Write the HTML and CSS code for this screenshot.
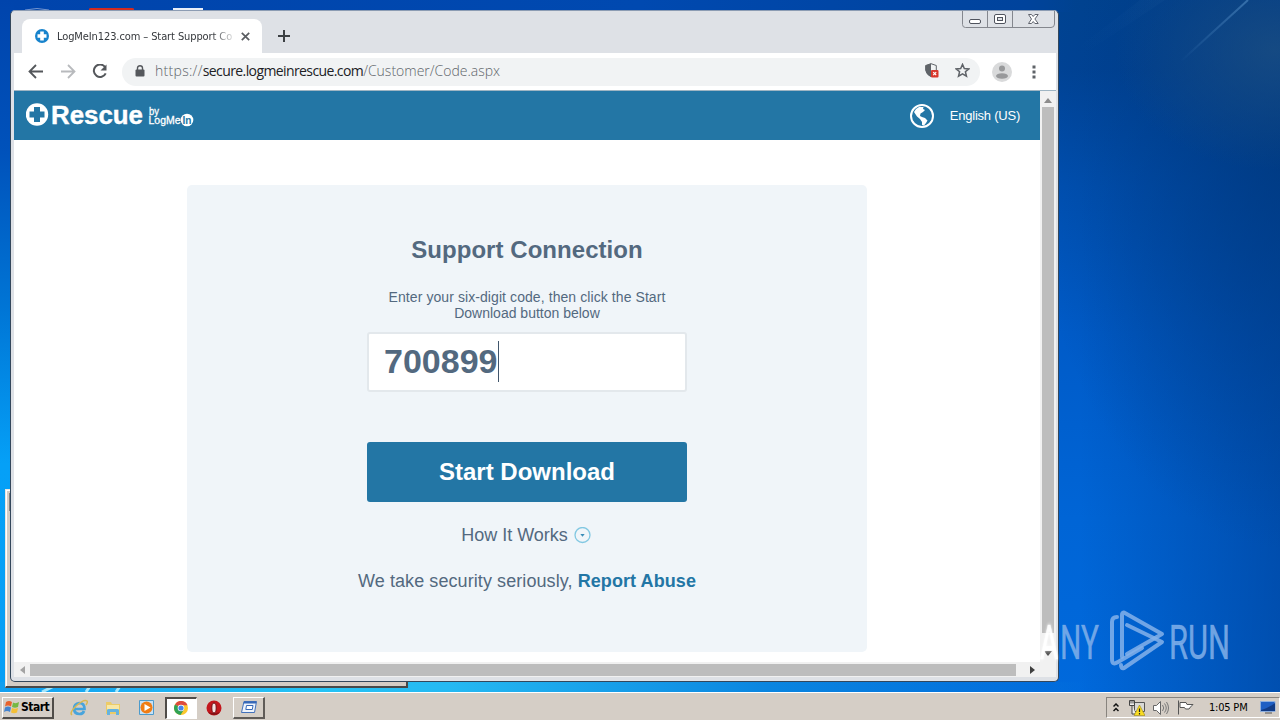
FILE: index.html
```
<!DOCTYPE html>
<html lang="en">

<head>
    <meta charset="utf-8">
    <title>LogMeIn123.com – Start Support Connection</title>
    <link rel="stylesheet" href="styles.css">
</head>

<body>
    <div class="desktop">
        <svg class="wallpaper" width="1280" height="693" viewBox="0 0 1280 693">
            <defs>
                <linearGradient id="ray" x1="0" y1="1" x2="1" y2="0">
                    <stop offset="0" stop-color="#5f9ad0" stop-opacity="0" />
                    <stop offset="1" stop-color="#5f9ad0" stop-opacity=".5" />
                </linearGradient>
            </defs>
            <path d="M1180 62L1248 0" stroke="url(#ray)" stroke-width="2" />
            <path d="M1075 50L1140 0H1165L1090 50z" fill="url(#ray)" opacity=".08" />
            <path d="M42 692L66 680M86 692L94 680M116 692L124 680" stroke="#a5e6fa" stroke-width="3" />
            <path d="M25 10q12-3 24 0" stroke="#7595cf" fill="none" />
            <path d="M89 11V9q0-1 2-1h41q2 0 2 1v2z" fill="#d42b20" />
            <path d="M173 8h30v3h-30z" fill="#e8eef8" />
        </svg>

        <div class="backwindow"></div>

        <div class="window">
            <div class="tabstrip">
                <div class="tab">
                    <svg width="14" height="14" viewBox="0 0 14 14">
                        <circle cx="7" cy="7" r="7" fill="#1783cc" />
                        <path d="M5.2 2.5h3.6v2.7h2.7v3.6H8.800v2.700H5.200V8.800H2.500V5.200h2.700z" fill="#fff" />
                    </svg>
                    <span class="tabtitle">LogMeIn123.com – Start Support Co</span>
                    <svg class="tabclose" width="9" height="9" viewBox="0 0 9 9">
                        <path d="M.8.8l7.400 7.400M8.200.8L.8 8.200" stroke="#5a5d61" stroke-width="1.700" />
                    </svg>
                </div>
                <svg class="newtab" width="12" height="12" viewBox="0 0 12 12">
                    <path d="M6 0v12M0 6h12" stroke="#3c4043" stroke-width="2" />
                </svg>
                <svg class="winbuttons" width="94" height="18" viewBox="0 0 94 18">
                    <path d="M.5 0V13.500Q.5 16.500 3.500 16.500H89Q92.500 16.500 92.500 13V0M25.500 0V16M50.500 0V16" fill="none" stroke="#84878e" />
                    <rect x="7.500" y="8.500" width="11" height="4" rx="1.500" fill="#fff" stroke="#50545e" />
                    <rect x="32.500" y="3.500" width="11" height="9" rx="1.500" fill="#fff" stroke="#50545e" />
                    <rect x="35.500" y="6.500" width="5" height="3" fill="#dee1e6" stroke="#50545e" />
                    <path d="M66.500 3.500h3l1.700 2 1.700-2h3.300l-3.300 4.500 3.300 4.500h-3.300l-1.700-2-1.700 2h-3l3-4.500z" fill="#fff" stroke="#60646e" />
                </svg>
            </div>

            <div class="toolbar">
                <svg class="nav" width="79" height="16" viewBox="0 0 79 16">
                    <path d="M15 7.500H2M8 1L1.500 7.500L8 14" fill="none" stroke="#54575b" stroke-width="1.800" />
                    <path d="M33 7.500H46M40 1L46.500 7.500L40 14" fill="none" stroke="#b8babd" stroke-width="1.800" />
                    <path d="M77 3A6.200 6.200 0 1 0 77.700 9.300" fill="none" stroke="#54575b" stroke-width="2" />
                    <path d="M78.500.5v6h-6z" fill="#54575b" />
                </svg>
                <div class="omnibox">
                    <svg width="10" height="12" viewBox="0 0 10 12">
                        <rect x=".5" y="4.500" width="9" height="7" rx="1" fill="#55585c" />
                        <path d="M2.500 5V3a2.500 2.300 0 0 1 5 0v2" fill="none" stroke="#55585c" stroke-width="1.400" />
                    </svg>
                    <span class="url"><span class="scheme">https://</span><b>secure.logmeinrescue.com</b>/Customer/Code.aspx</span>
                    <svg class="shield" width="14" height="15" viewBox="0 0 14 15">
                        <path d="M6 .7L11.300 2.500V7Q11 11 6 13.500Q1 11 .7 7V2.500z" fill="#f1f3f4" stroke="#5f6368" />
                        <path d="M6 .5L.5 2.500V7Q1 11.500 6 14z" fill="#5f6368" />
                        <rect x="6" y="7" width="7.500" height="7.500" rx="1" fill="#d9372c" />
                        <path d="M8.200 9.200l3 3m0-3l-3 3" stroke="#fff" stroke-width="1.200" />
                    </svg>
                    <svg width="15" height="15" viewBox="0 0 14 14">
                        <path d="M7 1.300L8.700 5.100L12.900 5.500L9.700 8.200L10.700 12.300L7 10.100L3.300 12.300L4.300 8.200L1.100 5.500L5.300 5.100z" fill="none" stroke="#5f6368" stroke-width="1.400" />
                    </svg>
                </div>
                <svg class="avatar" width="20" height="20" viewBox="0 0 20 20">
                    <circle cx="10" cy="10" r="10" fill="#d9dadb" />
                    <circle cx="10" cy="6.500" r="3" fill="#98999b" />
                    <ellipse cx="10" cy="14" rx="6" ry="2.800" fill="#98999b" />
                </svg>
                <svg class="menu" width="4" height="14" viewBox="0 0 4 14">
                    <path d="M.5.5h3v3h-3zM.5 5.500h3v3h-3zM.5 10.500h3v3h-3z" fill="#5f6368" />
                </svg>
            </div>

            <div class="view">
                <div class="page">
                    <div class="header">
                        <svg class="logo" width="170" height="26" viewBox="0 0 170 26">
                            <circle cx="11" cy="11.500" r="11.200" fill="#fff" />
                            <path d="M8 4h6v4.500h4.500v6H14V19H8v-4.500H3.500v-6H8z" fill="#2376a5" />
                            <text class="rescue" x="25" y="20.500" textLength="92" lengthAdjust="spacingAndGlyphs">Rescue</text>
                            <text class="by" x="123" y="12" textLength="10" lengthAdjust="spacingAndGlyphs">by</text>
                            <text class="by" x="122.500" y="21" textLength="32" lengthAdjust="spacingAndGlyphs">LogMe</text>
                            <circle cx="161" cy="17" r="6.300" fill="#fff" />
                            <text class="in" x="156.500" y="21" textLength="9" lengthAdjust="spacingAndGlyphs">In</text>
                        </svg>
                        <div class="language">
                            <svg width="24" height="24" viewBox="0 0 24 24">
                                <circle cx="12" cy="12" r="11" fill="none" stroke="#fff" stroke-width="2" />
                                <path d="M4 8L6 5L9 3L13.500 3L13 5L15 6L13 8L10.500 9.500L10 12L12 13L15 14L17.500 16.500L16 19L14 21.500L12 21L12 18L10 15L7 12.500z" fill="#fff" />
                            </svg>
                            <span>English (US)</span>
                        </div>
                    </div>
                    <div class="card">
                        <h1 class="headline">Support Connection</h1>
                        <p class="txt"><span class="enter">Enter your six-digit code, then click the Start</span><br>Download button below</p>
                        <div class="eingabe"><span>700899</span></div>
                        <div class="button">Start Download</div>
                        <div class="how">
                            <span>How It Works</span>
                            <svg width="17" height="17" viewBox="0 0 17 17">
                                <circle cx="8.500" cy="8" r="7.500" fill="none" stroke="#82c8e2" stroke-width="1.300" />
                                <path d="M6.300 7h4.400L8.500 9.700z" fill="#3a8db8" />
                            </svg>
                        </div>
                        <p class="abuse"><span>We take security seriously,</span> <b>Report Abuse</b></p>
                    </div>
                </div>
                <div class="scrollv">
                    <svg width="8" height="5" viewBox="0 0 8 5"><path d="M4 0l4 5H0z" fill="#8c8c8c" /></svg>
                    <div class="thumbv"></div>
                    <svg width="8" height="5" viewBox="0 0 8 5"><path d="M4 5L0 0h8z" fill="#505050" /></svg>
                </div>
            </div>
            <div class="scrollh">
                <svg width="5" height="8" viewBox="0 0 5 8"><path d="M0 4l5-4v8z" fill="#a3a3a3" /></svg>
                <div class="thumbh"></div>
                <svg width="5" height="8" viewBox="0 0 5 8"><path d="M5 4L0 0v8z" fill="#404040" /></svg>
            </div>
        </div>

        <svg class="watermark" width="240" height="80" viewBox="0 0 240 80">
            <text class="any glow" transform="translate(10 54) scale(.57 1)">A</text>
            <text class="any" transform="translate(30 54) scale(.61 1)">NY</text>
            <text class="any" transform="translate(139 54) scale(.63 1)">RUN</text>
            <g fill="none" stroke="#84b2ea" stroke-opacity=".85" stroke-width="4" stroke-linejoin="round" stroke-linecap="round">
                <path d="M87 12Q82 12 82 17V54Q82 61 88 57L112 43" />
                <path d="M97 49L132 29L94 7.500Q92 8 92 10V52" />
                <path d="M97 20L132 37L94 63Q91 64 91 60" />
            </g>
        </svg>
    </div>

    <div class="taskbar">
        <div class="start">
            <svg width="16" height="16" viewBox="0 0 16 16">
                <path d="M2 3Q5 1 8 3L7 7.500Q4 5.500 1 7.500z" fill="#e8622c" />
                <path d="M9 3.500Q12 5 15 3L14 8Q11 9.500 8 8z" fill="#75b843" />
                <path d="M1 8.500Q4 6.500 7 8.500L6 13Q3 11 0 13z" fill="#4584cf" />
                <path d="M8 9Q11 10.500 14 9L13 13.500Q10 15 7 13.500z" fill="#f4bf35" />
            </svg>
            <span>Start</span>
        </div>
        <div class="launch">
            <svg class="ie" width="18" height="18" viewBox="0 0 18 18">
                <path d="M4 10h10.500Q14.500 4 9.300 4Q4 4.500 4 10Q4.500 15 9.500 15Q13 15 14 12" fill="none" stroke="#48a4dc" stroke-width="2.700" />
                <path d="M2 16Q-1 14 6 7Q14 0 17 2Q18 3 16 6" fill="none" stroke="#d9b850" stroke-width="1.500" />
            </svg>
            <svg class="folder" width="18" height="18" viewBox="0 0 18 18">
                <path d="M2 3h5l1 2h8v10H2z" fill="#eccb67" />
                <path d="M3 6h12v6H3z" fill="#f8e7a5" />
                <path d="M3 16v-5q0-1 2-1h8q2 0 2 1v5h-3v-3H6v3z" fill="#66b3df" />
            </svg>
            <svg class="player" width="18" height="18" viewBox="0 0 18 18">
                <path d="M1.500 1.500h14v14h-14z" fill="#c7e2f6" stroke="#4c9bcc" />
                <circle cx="8.500" cy="8.500" r="6" fill="#f07d15" />
                <path d="M6.500 5l6 3.500-6 3.500z" fill="#fff" />
            </svg>
            <div class="taskbutton pressed">
                <svg width="14" height="14" viewBox="0 0 14 14">
                    <circle cx="7" cy="7" r="7" fill="#fbc72d" />
                    <path d="M7 7L1 3.400A7 7 0 0 1 13.500 4.200H7z" fill="#dd4b3e" />
                    <path d="M1 3.400A7 7 0 0 0 6.500 14L10 8.500L7 7z" fill="#30a254" />
                    <circle cx="7" cy="7" r="3.300" fill="#fff" />
                    <circle cx="7" cy="7" r="2.600" fill="#4684e8" />
                </svg>
            </div>
            <svg class="opera" width="16" height="16" viewBox="0 0 16 16">
                <circle cx="8" cy="8" r="7.500" fill="#c3161c" />
                <path d="M2 12a7.500 7.500 0 0 0 12 0q-6 2-12 0" fill="#891015" />
                <ellipse cx="8" cy="8" rx="2.200" ry="5" fill="#f5e2e2" stroke="#6d0d12" />
            </svg>
            <div class="taskbutton">
                <svg width="16" height="12" viewBox="0 0 16 12">
                    <path d="M3 .5h12.500l-2 11H.5z" fill="#edf3fc" stroke="#4271bb" />
                    <path d="M3 .5h12.500l-.4 2H2.500z" fill="#3768b7" />
                    <path d="M5.500 4.500h6.500l-.7 4H4.800z" fill="#fff" stroke="#3768b7" />
                </svg>
            </div>
        </div>
        <div class="tray">
            <svg class="chevrons" width="6" height="10" viewBox="0 0 6 10">
                <path d="M.5 3.500L3 1L5.500 3.500M.5 8L3 5.500L5.500 8" fill="none" stroke="#111" stroke-width="1.500" />
            </svg>
            <svg class="network" width="16" height="16" viewBox="0 0 16 16">
                <path d="M5.500 2.500h10v9h-10z" fill="#d9d9d6" stroke="#555" />
                <path d="M.5.500h5v5h-5zM3 5v9h4M2 .5v3M4 .5v3" fill="#eee" stroke="#444" />
                <path d="M10.500 5L16 15.500H5z" fill="#f9dc22" stroke="#9a8517" stroke-width=".6" />
                <path d="M10.500 8.500v3.500m0 1v1.500" stroke="#222" stroke-width="1.200" />
            </svg>
            <svg class="speaker" width="16" height="14" viewBox="0 0 16 14">
                <path d="M.5 4.500h3l4-4v13l-4-4h-3z" fill="#fff" stroke="#666" />
                <path d="M9.500 4q2.500 3 0 6M11.500 2.500q3.500 4.500 0 9M13.500 1q4 6 0 12" fill="none" stroke="#777" />
            </svg>
            <svg class="flag" width="17" height="15" viewBox="0 0 17 15">
                <path d="M1.500.5v14M3 2.500h6l1 2h6l-2.500 2.500-1.500 2H8.500l-1-1.500H3z" fill="#fff" stroke="#555" />
            </svg>
            <span class="clock">1:05 PM</span>
            <svg class="showdesk" width="16" height="13" viewBox="0 0 16 13">
                <path d="M.5.500h14.500v10H.5z" fill="#1f5fc4" stroke="#8daedd" />
                <path d="M1 9Q7 8 15 2V10H1z" fill="#123c86" />
                <path d="M5 12h7" stroke="#555" />
            </svg>
        </div>
    </div>
</body>

</html>
```
FILE: styles.css
```
* {
    box-sizing: border-box;
}

body {
    margin: 0;
    width: 1280px;
    height: 720px;
    overflow: hidden;
    display: flex;
    flex-direction: column;
    font-family: "Liberation Sans", Arial, sans-serif;
}

svg {
    display: block;
    flex: none;
}

h1,
p {
    margin: 0;
}

.desktop {
    position: relative;
    height: 692px;
    flex: none;
    overflow: hidden;
    background:
        linear-gradient(to right, #129ff0 0, #25c3f5 25%, #25b9f2 35%, #0a85e0 60%, transparent 85%) 0 682px / 1280px 10px no-repeat,
        linear-gradient(to bottom, #0044ac 0, #0052bb 22%, #0076d6 45%, #05a0f7 67%, #089ff5 100%) 0 0 / 14px 100% no-repeat,
        linear-gradient(to right, #0044ac 0, #0049b0 50%, #00439c 80%, transparent 84%) 0 0 / 100% 12px no-repeat,
        radial-gradient(ellipse 160px 120px at 1275px 50px, rgba(30, 80, 130, .7), transparent),
        radial-gradient(ellipse 260px 400px at 1290px 150px, rgba(0, 55, 120, .65), transparent),
        linear-gradient(to right, transparent 1080px, rgba(0, 58, 140, .55) 1280px),
        linear-gradient(to bottom, #004391 0, #004396 10%, #0050b2 27%, #005bc8 48%, #0065d6 75%, #0069dc 100%);
}

.wallpaper {
    position: absolute;
    left: 0;
    top: 0;
}

.backwindow {
    position: absolute;
    left: 5px;
    top: 489px;
    width: 403px;
    height: 199px;
    background: linear-gradient(#808080, #808080) 3px 3px / 10px 18px no-repeat #d4ccc5;
    border: 1px solid #eae5df;
    border-right: 2px solid #484848;
    border-bottom: 2px solid #484848;
    box-shadow: inset 1px 1px #fff;
}

/* browser */
.window {
    position: absolute;
    left: 10px;
    top: 10px;
    width: 1049px;
    height: 672px;
    display: flex;
    flex-direction: column;
    padding: 0 2px 4px 3px;
    border: 1px solid #34475b;
    border-top-color: #8c9cb3;
    border-radius: 5px;
    background: #dee1e6;
}

.tabstrip {
    display: flex;
    height: 42px;
    flex: none;
    padding-left: 8px;
    background: #dee1e6;
}

.tab {
    display: flex;
    align-items: center;
    width: 240px;
    height: 34px;
    margin-top: 8px;
    padding: 0 11px 0 13px;
    background: #fff;
    border-radius: 8px 8px 0 0;
}

.tabtitle {
    width: 177px;
    margin-left: 8px;
    overflow: hidden;
    white-space: nowrap;
    font-family: "DejaVu Sans Condensed", "DejaVu Sans", sans-serif;
    font-size: 11px;
    letter-spacing: -0.1px;
    color: #35383c;
    -webkit-mask-image: linear-gradient(to right, #000 155px, transparent 180px);
    mask-image: linear-gradient(to right, #000 155px, transparent 180px);
}

.tabclose {
    margin-left: 7px;
}

.newtab {
    margin: 19px 0 0 16px;
}

.winbuttons {
    margin-left: auto;
}

.toolbar {
    display: flex;
    align-items: center;
    height: 38px;
    flex: none;
    padding-left: 14px;
    background: #fff;
    border-bottom: 1px solid #9fb5c3;
}

.omnibox {
    display: flex;
    align-items: center;
    width: 858px;
    height: 28px;
    margin-left: 15px;
    padding: 0 10px 2px 13px;
    border-radius: 14px;
    background: #f1f3f4;
}

.url {
    margin-left: 10px;
    font-family: "Open Sans", sans-serif;
    font-size: 14px;
    font-weight: 300;
    color: #60656a;
    white-space: nowrap;
}

.url b {
    font-weight: 400;
    letter-spacing: -0.6px;
    color: #202124;
}

.scheme {
    letter-spacing: 0.3px;
}

.shield {
    margin-left: auto;
    margin-right: 16px;
}

.avatar {
    margin-left: 12px;
}

.menu {
    margin-left: 20px;
}

.view {
    display: flex;
    height: 571px;
    flex: none;
}

.page {
    width: 1026px;
    background: #fff;
}

.header {
    display: flex;
    justify-content: space-between;
    align-items: center;
    height: 49px;
    padding: 0 20px 0 12px;
    background: #2376a5;
    color: #fff;
}

.rescue {
    font-size: 25px;
    font-weight: bold;
    fill: #fff;
    stroke: #fff;
    stroke-width: .4px;
}

.by {
    font-size: 10.500px;
    fill: #fff;
    stroke: #fff;
    stroke-width: .3px;
}

.in {
    font-size: 11px;
    font-weight: bold;
    fill: #2376a5;
}

.language {
    display: flex;
    align-items: center;
    gap: 16px;
    font-size: 13px;
    letter-spacing: -0.23px;
}

.card {
    display: flex;
    flex-direction: column;
    align-items: center;
    width: 680px;
    height: 467px;
    margin: 45px auto 0 173px;
    padding-top: 50px;
    border-radius: 5px;
    background: #f0f5f9;
    color: #53697f;
}

.headline {
    font-size: 24px;
    line-height: 30px;
    letter-spacing: 0.05px;
}

.txt {
    margin-top: 24px;
    text-align: center;
    font-size: 14px;
    line-height: 16px;
}

.enter {
    letter-spacing: 0.08px;
}

.eingabe {
    display: flex;
    align-items: center;
    width: 320px;
    height: 60px;
    margin-top: 11px;
    padding: 0 0 2px 15px;
    background: #fff;
    border: 2px solid #e3e8ec;
    border-radius: 3px;
    font-size: 34px;
    font-weight: bold;
}

.eingabe span {
    height: 41px;
    line-height: 40px;
    padding-right: 1px;
    border-right: 1px solid #41566c;
}

.button {
    width: 320px;
    height: 60px;
    margin-top: 50px;
    border-radius: 3px;
    background: #2376a5;
    color: #fff;
    text-align: center;
    font-size: 24px;
    font-weight: bold;
    line-height: 59px;
}

.how {
    display: flex;
    align-items: center;
    gap: 6px;
    height: 24px;
    margin-top: 21px;
    margin-right: 2px;
    font-size: 18px;
}

.abuse {
    margin-top: 23px;
    font-size: 18px;
    line-height: 22px;
    letter-spacing: 0.08px;
    white-space: nowrap;
}

.abuse b {
    color: #2376a5;
}

.scrollv {
    display: flex;
    flex-direction: column;
    align-items: center;
    width: 16px;
    padding: 7px 0 6px;
    background: #f1f1f1;
}

.thumbv {
    flex: 1;
    width: 12px;
    margin: 4px 0 18px;
    background: #bdbdbd;
}

.scrollh {
    display: flex;
    align-items: center;
    height: 15px;
    flex: none;
    padding: 0 21px 0 6px;
    background: #f1f1f1;
}

.thumbh {
    flex: 1;
    height: 12px;
    margin: 0 14px 0 5px;
    background: #bdbdbd;
}

.watermark {
    position: absolute;
    left: 1030px;
    top: 605px;
}

.any {
    font-family: Roboto, sans-serif;
    font-size: 49px;
    fill: #84b2ea;
    fill-opacity: .85;
    stroke: #84b2ea;
    stroke-opacity: .6;
    stroke-width: .7px;
}

.glow {
    fill: #fff;
    stroke: #fff;
    filter: drop-shadow(0 0 2px #fff);
}

/* taskbar */
.taskbar {
    display: flex;
    align-items: center;
    height: 28px;
    flex: none;
    padding: 2px 0 0 2px;
    background: #d5cec6;
    border-top: 1px solid #fff;
}

.start {
    display: flex;
    align-items: center;
    gap: 1px;
    width: 52px;
    height: 22px;
    padding-left: 1px;
    border: 1px solid #fff;
    border-right: 2px solid #504c48;
    border-bottom: 2px solid #504c48;
    font-family: "DejaVu Sans Condensed", sans-serif;
    font-size: 12px;
    font-weight: bold;
    letter-spacing: -0.5px;
    color: #000;
}

.launch {
    display: flex;
    align-items: center;
    padding-left: 16px;
}

.folder {
    margin-left: 16px;
}

.player {
    margin-left: 16px;
}

.taskbutton {
    display: flex;
    align-items: center;
    justify-content: center;
    width: 32px;
    height: 22px;
    border: 1px solid #fff;
    border-right: 2px solid #605c58;
    border-bottom: 2px solid #605c58;
}

.pressed {
    margin-left: 9px;
    padding-right: 2px;
    background: #fff;
    border: 1px solid #fff;
    border-left: 2px solid #504c48;
    border-top: 2px solid #504c48;
}

.opera {
    margin: 0 11px 0 9px;
}

.tray {
    display: flex;
    align-items: center;
    width: 174px;
    height: 21px;
    margin-left: auto;
    padding-left: 6px;
    border: 1px solid #fff;
    border-left-color: #88847e;
    border-top-color: #88847e;
}

.network {
    margin-left: 10px;
}

.speaker {
    margin-left: 8px;
}

.flag {
    margin-left: 8px;
}

.clock {
    margin-left: 15px;
    width: 42px;
    white-space: nowrap;
    font-family: "DejaVu Sans Condensed", sans-serif;
    font-size: 11px;
    letter-spacing: -0.2px;
    color: #000;
}

.showdesk {
    margin-left: 9px;
}
```
